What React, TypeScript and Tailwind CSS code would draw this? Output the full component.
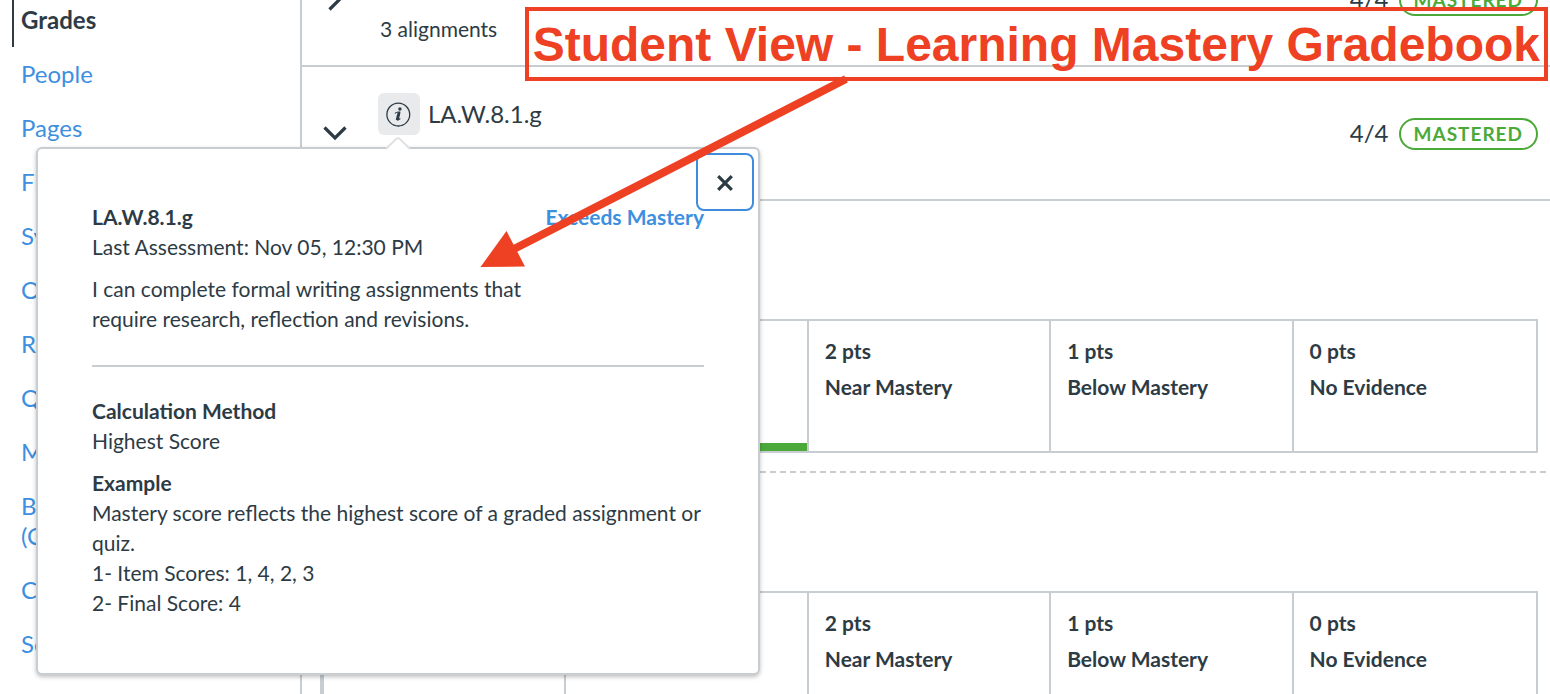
import type { ReactNode } from "react";

const navItems = [
  { label: "Grades", active: true },
  { label: "People" },
  { label: "Pages" },
  { label: "Files" },
  { label: "Syllabus" },
  { label: "Outcomes" },
  { label: "Rubrics" },
  { label: "Quizzes" },
  { label: "Modules" },
  { label: "BigBlueButton (Conferences)" },
  { label: "Collaborations" },
  { label: "Settings" },
];

const ratings = [
  { points: 4, label: "Exceeds Mastery" },
  { points: 3, label: "Mastery", achieved: true },
  { points: 2, label: "Near Mastery" },
  { points: 1, label: "Below Mastery" },
  { points: 0, label: "No Evidence" },
];

function CourseNav() {
  return (
    <nav
      aria-label="Course"
      className="w-[302px] shrink-0 border-r-2 border-[#c7cdd1] pl-3"
    >
      <ul className="-mt-[7px] text-[24px] leading-[30px]">
        {navItems.map((item) => (
          <li key={item.label}>
            <a
              href="#"
              aria-current={item.active ? "page" : undefined}
              className={
                item.active
                  ? "block border-l-2 border-[#2d3b45] py-3 pl-[7px] font-bold"
                  : "block w-[210px] border-l-2 border-transparent py-3 pl-[7px] text-[#3d8fdf]"
              }
            >
              {item.label}
            </a>
          </li>
        ))}
      </ul>
    </nav>
  );
}

function Chevron({ open }: { open?: boolean }) {
  return (
    <svg width="26" height="26" viewBox="0 0 26 26" fill="none" aria-hidden="true">
      <path
        d={open ? "M2.5 7.5 L13 18 L23.5 7.5" : "M7.5 2.5 L18 13 L7.5 23.5"}
        stroke="#2d3b45"
        strokeWidth="3.2"
      />
    </svg>
  );
}

function InfoIcon() {
  return (
    <svg width="26" height="26" viewBox="0 0 26 26" fill="none" aria-hidden="true">
      <circle cx="12.3" cy="13.6" r="11.4" stroke="#2d3b45" strokeWidth="1.3" />
      <circle cx="13.9" cy="8" r="1.7" fill="#2d3b45" />
      <path
        d="M8.9 12.4 C10.3 11.2 12.3 10.8 13.7 11.2 L11.6 18.8 C12.7 18.9 13.5 18.2 14.3 17.5"
        stroke="#2d3b45"
        strokeWidth="1.2"
      />
      <path d="M13.1 11.4 L11.1 19.2" stroke="#2d3b45" strokeWidth="2.8" />
    </svg>
  );
}

function OutcomePopover() {
  return (
    <div
      role="dialog"
      aria-label="LA.W.8.1.g"
      className="absolute top-[54px] -left-[342px] z-10 w-[724px] rounded-md border-2 border-[#c7cdd1] bg-white px-[54px] pt-[53px] pb-[55px] text-[21px] leading-[30px] shadow-[0_2px_4px_rgba(0,0,0,0.25)]"
    >
      <svg
        className="absolute -top-[12px] left-[348px]"
        width="24"
        height="13"
        viewBox="0 0 24 13"
        aria-hidden="true"
      >
        <path d="M0 12 L10 2 Q12 0.6 14 2 L24 12 V13 H0 Z" fill="#fff" />
        <path d="M0 12 L10 2 Q12 0.6 14 2 L24 12" fill="none" stroke="#dfe2e4" strokeWidth="2" />
      </svg>
      <button
        type="button"
        aria-label="Close"
        className="absolute top-1 right-1 flex size-[58px] items-center justify-center rounded-lg border-2 border-[#3d8cdd] bg-white"
      >
        <svg width="16" height="18" viewBox="0 0 16 18" aria-hidden="true">
          <path d="M1.2 3.2 L14.8 16.8 M14.8 3.2 L1.2 16.8" stroke="#2d3b45" strokeWidth="3.2" />
        </svg>
      </button>

      <div className="flex justify-between font-bold">
        <h3>LA.W.8.1.g</h3>
        <span className="relative text-[#3d8fdf]">Exceeds Mastery</span>
      </div>
      <p>Last Assessment: Nov 05, 12:30 PM</p>
      <p className="mt-3 w-[460px]">
        I can complete formal writing assignments that require research, reflection and revisions.
      </p>
      <hr className="mt-[31px] mb-[29px] border-t-2 border-[#c7cdd1]" />
      <h4 className="font-bold">Calculation Method</h4>
      <p>Highest Score</p>
      <h4 className="mt-3 font-bold">Example</h4>
      <p>Mastery score reflects the highest score of a graded assignment or quiz.</p>
      <p>1- Item Scores: 1, 4, 2, 3</p>
      <p>2- Final Score: 4</p>
    </div>
  );
}

type OutcomeRowProps = {
  name: string;
  open?: boolean;
  children?: ReactNode;
};

function OutcomeRow({ name, open, children }: OutcomeRowProps) {
  return (
    <div className="flex items-center border-b-2 border-[#c7cdd1] pr-3 pl-5">
      <button type="button" aria-label={`Toggle ${name}`} aria-expanded={!!open} className="mr-[30px]">
        <Chevron open={open} />
      </button>
      <div className="flex-1 pt-[26px] pb-[21px]">
        <div className="flex items-center gap-2">
          <div className="relative">
            <button
              type="button"
              aria-label={`About ${name}`}
              className={
                open
                  ? "flex size-[42px] items-center justify-center rounded-md bg-[#e8eaec]"
                  : "flex size-[42px] items-center justify-center rounded-md"
              }
            >
              <InfoIcon />
            </button>
            {children}
          </div>
          <h2 className="text-[24px] leading-[30px]">{name}</h2>
        </div>
        <p className="mt-[13px] pl-[2px] text-[21px] leading-[30px]">3 alignments</p>
      </div>
      <div className="flex items-start gap-[10px] pt-0.5">
        <span className="text-[24px] leading-[30px]">4/4</span>
        <span className="rounded-full border-2 border-[#4ba93a] px-[13px] text-[19px] leading-[28px] font-bold tracking-[1px] text-[#4ba93a]">
          MASTERED
        </span>
      </div>
    </div>
  );
}

function AlignmentRatings() {
  return (
    <section className="mr-1 ml-[18px] border-b-2 border-dashed border-[#c7cdd1] pt-[118px] pr-2 pb-[18px]">
      <ul className="grid grid-cols-5 border-2 border-l-4 border-[#c7cdd1] text-[21px] leading-[36px] font-bold">
        {ratings.map((r) => (
          <li key={r.points} className="flex flex-col border-r-2 border-[#c7cdd1] last:border-r-0">
            <div className="px-4 pt-3 pb-[38px]">
              <div>{r.points} pts</div>
              <div>{r.label}</div>
            </div>
            <div className={r.achieved ? "h-2 bg-[#4ba93a]" : "h-2"} />
          </li>
        ))}
      </ul>
    </section>
  );
}

function Callout() {
  return (
    <div className="absolute top-[7px] right-[2px] z-20 border-4 border-[#ee4023] px-1 pt-0.5 text-[#ee4023]">
      <p className="font-['Liberation_Sans',Arial,sans-serif] text-[48px] leading-[64px] font-bold whitespace-nowrap">
        Student View - Learning Mastery Gradebook
      </p>
      <svg
        className="absolute top-[64px] right-[694px]"
        width="370"
        height="195"
        viewBox="480 75 370 195"
        aria-hidden="true"
      >
        <path d="M846 79 L512 250" stroke="#ee4023" strokeWidth="8" />
        <path d="M480.5 267 L506.5 231 L525 266.5 Z" fill="#ee4023" />
      </svg>
    </div>
  );
}

export default function App() {
  return (
    <div className="relative flex h-screen overflow-hidden bg-white font-['Lato',sans-serif] text-[#2d3b45]">
      <CourseNav />
      <main className="-mt-[67px] min-w-0 flex-1">
        <OutcomeRow name="LA.W.8.1.f" />
        <OutcomeRow name="LA.W.8.1.g" open>
          <OutcomePopover />
        </OutcomeRow>
        <AlignmentRatings />
        <AlignmentRatings />
      </main>
      <Callout />
    </div>
  );
}
